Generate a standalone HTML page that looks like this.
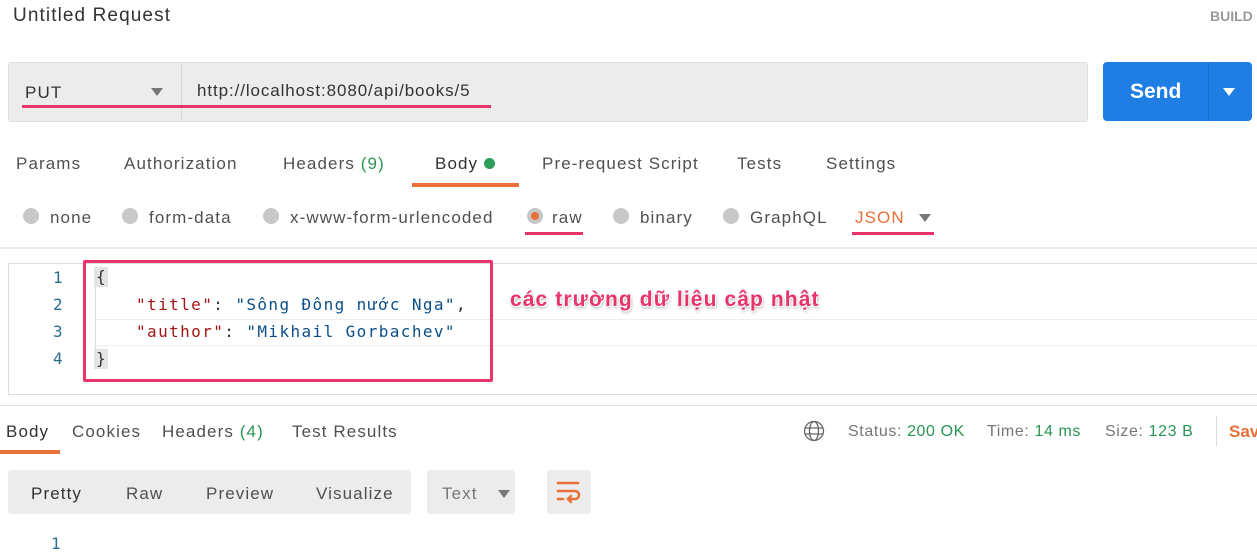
<!DOCTYPE html>
<html><head><meta charset="utf-8"><style>
body{margin:0;width:1257px;height:558px;overflow:hidden;background:#fff;font-family:"Liberation Sans",sans-serif;position:relative;color:#505050}
.a{position:absolute;white-space:nowrap}
.t{font-size:17px;line-height:20px;letter-spacing:1.1px}
.r{position:absolute;width:16px;height:16px;border-radius:50%;background:#c8c8c8;top:208px}
.mono{font-family:"DejaVu Sans Mono","Liberation Mono",monospace;font-size:16px;line-height:20px;letter-spacing:1.4px}
.ln{color:#2a6f8e;font-family:"DejaVu Sans Mono",monospace;font-size:16px}
.g{color:#2a9654}
.pk{background:#e8336b;position:absolute;height:3px}
</style></head><body>
<div class="a" style="left:13px;top:5px;font-size:19px;color:#333;letter-spacing:1.1px">Untitled Request</div>
<div class="a" style="left:1210px;top:8px;font-size:14px;font-weight:bold;color:#9a9a9a">BUILD</div>

<div class="a" style="left:8px;top:62px;width:1078px;height:58px;background:#ececec;border:1px solid #ddd;border-radius:3px"></div>
<div class="a" style="left:181px;top:63px;width:1px;height:58px;background:#d8d8d8"></div>
<div class="a t" style="left:25px;top:83px;color:#333">PUT</div>
<div class="a" style="left:151px;top:88px;border-left:6px solid transparent;border-right:6px solid transparent;border-top:8px solid #777"></div>
<div class="a t" style="left:197px;top:81px;color:#333;letter-spacing:0.9px">http://localhost:8080/api/books/5</div>
<div class="pk" style="left:22px;top:105px;width:469px"></div>

<div class="a" style="left:1103px;top:62px;width:149px;height:59px;background:#1e7ee4;border-radius:4px"></div>
<div class="a" style="left:1208px;top:62px;width:1px;height:59px;background:#186fcd"></div>
<div class="a" style="left:1130px;top:80px;font-size:21px;font-weight:bold;color:#fff">Send</div>
<div class="a" style="left:1223px;top:88px;border-left:6px solid transparent;border-right:6px solid transparent;border-top:8px solid #fff"></div>

<div class="a t" style="left:16px;top:154px">Params</div>
<div class="a t" style="left:124px;top:154px">Authorization</div>
<div class="a t" style="left:283px;top:154px">Headers <span class="g">(9)</span></div>
<div class="a t" style="left:435px;top:154px;color:#333">Body</div>
<div class="a" style="left:484px;top:158px;width:11px;height:11px;border-radius:50%;background:#2a9e58"></div>
<div class="a t" style="left:542px;top:154px">Pre-request Script</div>
<div class="a t" style="left:737px;top:154px">Tests</div>
<div class="a t" style="left:826px;top:154px">Settings</div>
<div class="a" style="left:412px;top:183px;width:107px;height:4px;background:#e8703a"></div>

<div class="r" style="left:23px"></div><div class="a t" style="left:50px;top:208px">none</div>
<div class="r" style="left:122px"></div><div class="a t" style="left:149px;top:208px">form-data</div>
<div class="r" style="left:263px"></div><div class="a t" style="left:290px;top:208px">x-www-form-urlencoded</div>
<div class="r" style="left:527px"></div><div class="a" style="left:531px;top:212px;width:8px;height:8px;border-radius:50%;background:#e8703a"></div>
<div class="a t" style="left:552px;top:208px">raw</div>
<div class="r" style="left:613px"></div><div class="a t" style="left:640px;top:208px">binary</div>
<div class="r" style="left:723px"></div><div class="a t" style="left:750px;top:208px">GraphQL</div>
<div class="a t" style="left:855px;top:208px;color:#e8703a">JSON</div>
<div class="a" style="left:919px;top:214px;border-left:6px solid transparent;border-right:6px solid transparent;border-top:8px solid #777"></div>
<div class="pk" style="left:525px;top:232px;width:58px"></div>
<div class="pk" style="left:852px;top:232px;width:82px"></div>
<div class="a" style="left:0;top:247px;width:1257px;height:2px;background:#ececec"></div>

<div class="a" style="left:8px;top:263px;width:1260px;height:130px;border:1px solid #ddd"></div>
<div class="a" style="left:94px;top:319px;width:1163px;height:1px;background:#eee"></div>
<div class="a" style="left:94px;top:345px;width:1163px;height:1px;background:#eee"></div>
<div class="a" style="left:95px;top:268px;width:1px;height:100px;background:#ddd"></div>
<div class="a ln" style="left:53px;top:268px">1</div>
<div class="a ln" style="left:53px;top:295px">2</div>
<div class="a ln" style="left:53px;top:322px">3</div>
<div class="a ln" style="left:53px;top:349px">4</div>
<div class="a mono" style="left:94px;top:267px;color:#333;background:#e4e4e4;letter-spacing:0;padding:0 2px">{</div>
<div class="a mono" style="left:136px;top:295px"><span style="color:#a31515">"title"</span><span style="color:#333">: </span><span style="color:#0b4f8a">"Sông Đông nước Nga"</span><span style="color:#333">,</span></div>
<div class="a mono" style="left:136px;top:322px"><span style="color:#a31515">"author"</span><span style="color:#333">: </span><span style="color:#0b4f8a">"Mikhail Gorbachev"</span></div>
<div class="a mono" style="left:94px;top:349px;color:#333;background:#e4e4e4;letter-spacing:0;padding:0 2px">}</div>
<div class="a" style="left:83px;top:260px;width:404px;height:116px;border:3px solid #e8336b;border-radius:2px"></div>
<div class="a" style="left:510px;top:288px;font-size:21px;font-weight:bold;letter-spacing:1.1px;color:#e8336b;text-shadow:1px 1px 0 #fff,-1px -1px 0 #fff,1px 2px 3px rgba(0,0,0,.35)">các trường dữ liệu cập nhật</div>
<div class="a" style="left:0;top:405px;width:1257px;height:1px;background:#e0e0e0"></div>

<div class="a t" style="left:6px;top:422px;color:#333">Body</div>
<div class="a t" style="left:72px;top:422px">Cookies</div>
<div class="a t" style="left:162px;top:422px">Headers <span class="g">(4)</span></div>
<div class="a t" style="left:292px;top:422px">Test Results</div>
<div class="a" style="left:0;top:450px;width:60px;height:4px;background:#e8703a"></div>

<svg class="a" style="left:803px;top:420px" width="22" height="22" viewBox="0 0 22 22" fill="none" stroke="#666" stroke-width="1.3"><circle cx="11" cy="11" r="9.5"/><ellipse cx="11" cy="11" rx="4.5" ry="9.5"/><line x1="2" y1="8" x2="20" y2="8"/><line x1="2" y1="14" x2="20" y2="14"/></svg>
<div class="a" style="left:848px;top:423px;font-size:16px;color:#777;letter-spacing:0.6px">Status: <span class="g">200 OK</span></div>
<div class="a" style="left:987px;top:423px;font-size:16px;color:#777;letter-spacing:0.6px">Time: <span class="g">14 ms</span></div>
<div class="a" style="left:1105px;top:423px;font-size:16px;color:#777;letter-spacing:0.6px">Size: <span class="g">123 B</span></div>
<div class="a" style="left:1216px;top:416px;width:1px;height:30px;background:#ddd"></div>
<div class="a" style="left:1229px;top:422px;font-size:17px;font-weight:bold;color:#e8703a">Save</div>

<div class="a" style="left:8px;top:470px;width:403px;height:44px;background:#ececec;border-radius:3px"></div>
<div class="a t" style="left:31px;top:484px;color:#333">Pretty</div>
<div class="a t" style="left:126px;top:484px">Raw</div>
<div class="a t" style="left:206px;top:484px">Preview</div>
<div class="a t" style="left:316px;top:484px">Visualize</div>
<div class="a" style="left:427px;top:470px;width:88px;height:44px;background:#ececec;border-radius:3px"></div>
<div class="a t" style="left:442px;top:484px;color:#777">Text</div>
<div class="a" style="left:498px;top:490px;border-left:6px solid transparent;border-right:6px solid transparent;border-top:8px solid #777"></div>
<div class="a" style="left:547px;top:470px;width:44px;height:44px;background:#ececec;border-radius:3px"></div>
<svg class="a" style="left:556px;top:480px" width="26" height="24" viewBox="0 0 26 24" fill="none" stroke="#e8703a" stroke-width="2.5" stroke-linecap="round"><line x1="2" y1="3" x2="22" y2="3"/><path d="M2 11 H19 a4 4 0 0 1 0 8 H12"/><path d="M15 16 l-3 3 3 3"/><line x1="2" y1="19" x2="7" y2="19"/></svg>
<div class="a ln" style="left:51px;top:534px">1</div>
</body></html>
